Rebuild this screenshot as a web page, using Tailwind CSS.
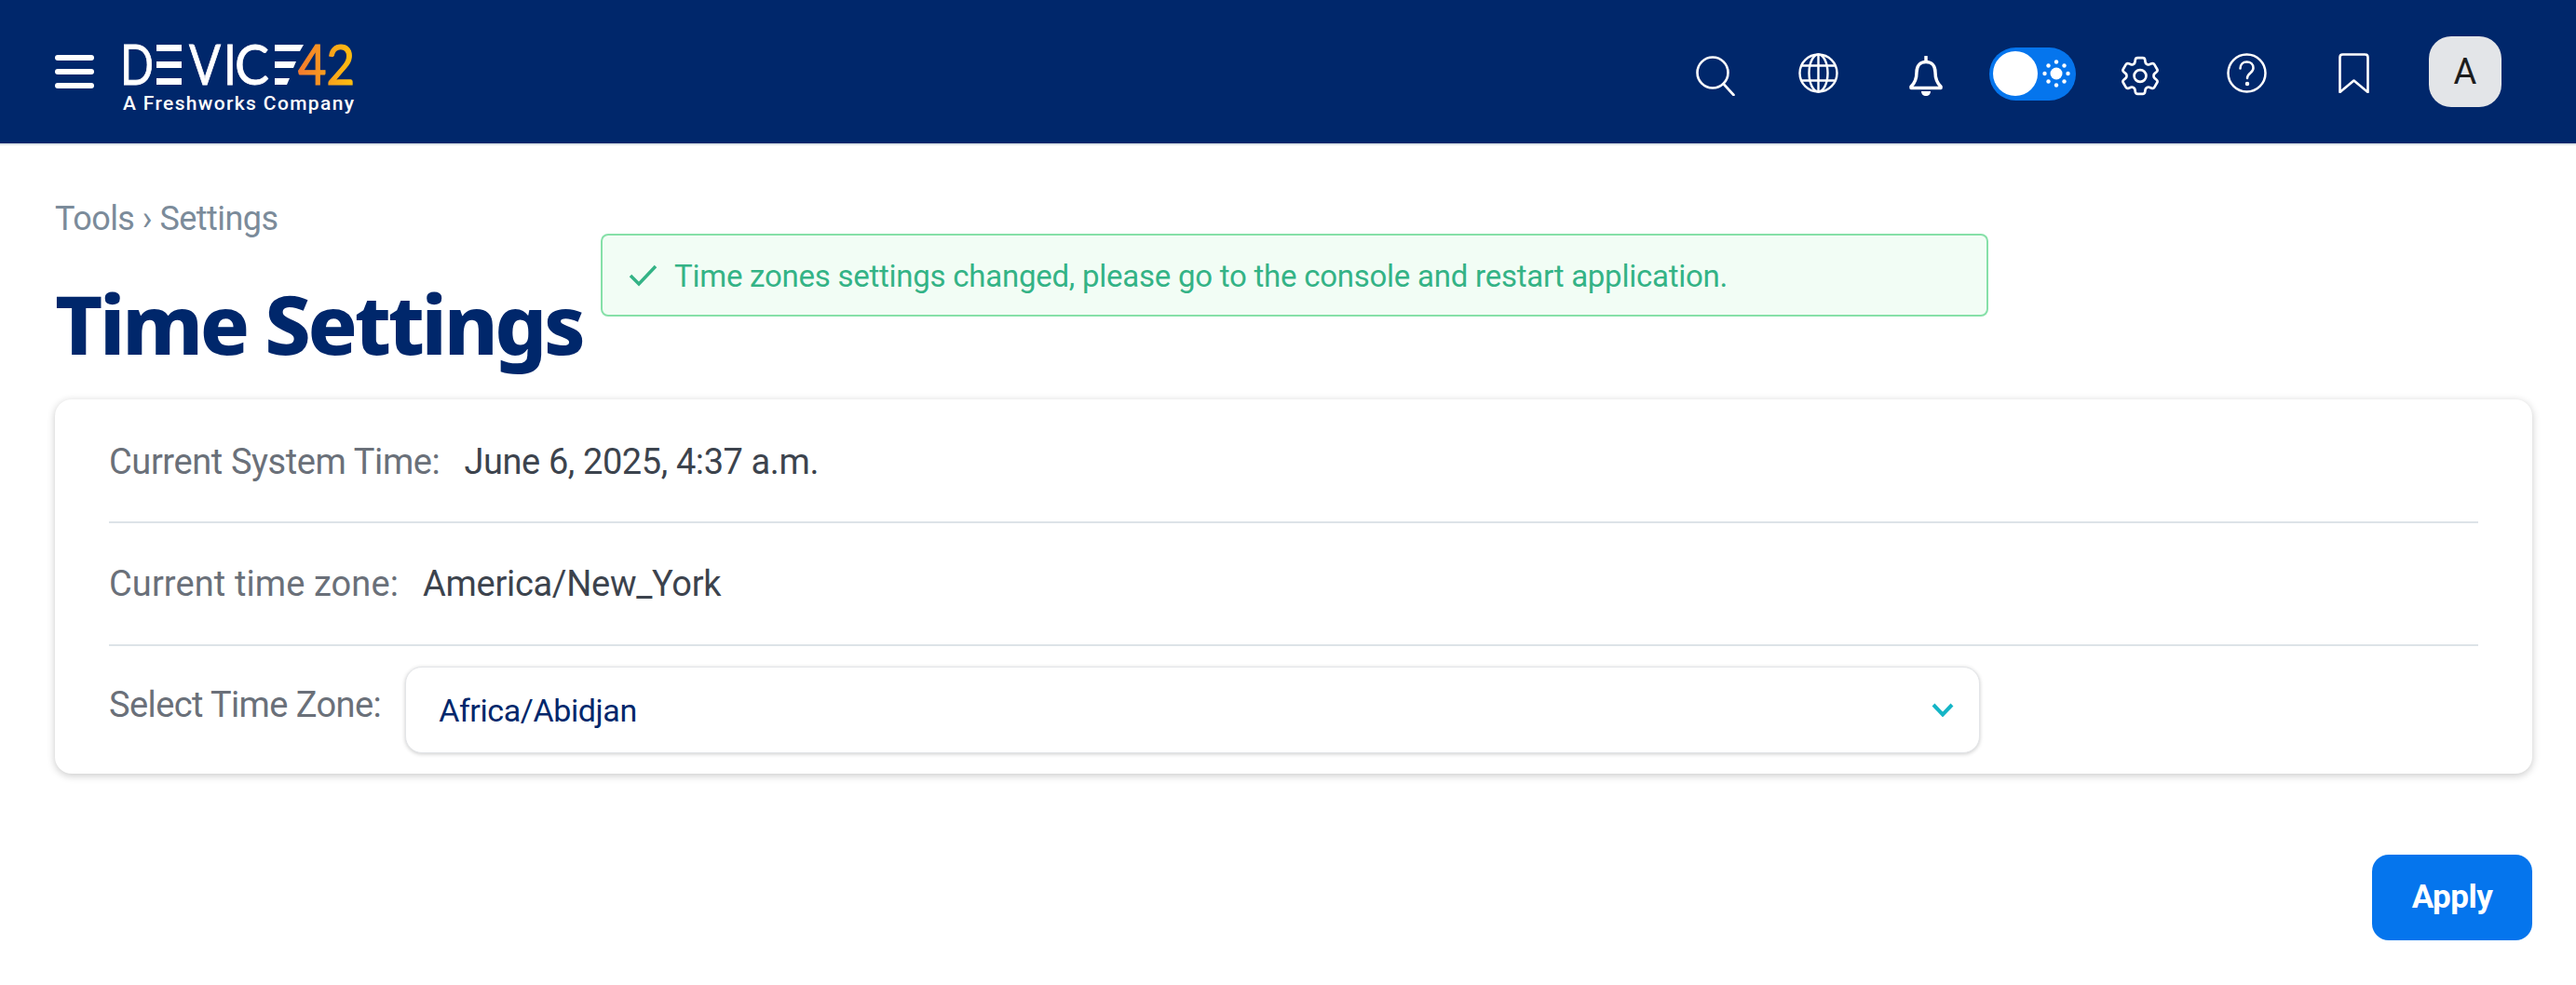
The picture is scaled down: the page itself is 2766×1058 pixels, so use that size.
<!DOCTYPE html>
<html lang="en">
<head>
<meta charset="utf-8">
<title>Time Settings</title>
<script src="https://cdn.jsdelivr.net/npm/@tailwindcss/browser@4"></script>
</head>
<body class="bg-white font-['Roboto',sans-serif] overflow-hidden">
<div class="relative h-[1058px] w-[2766px]">
  <header class="flex h-[156px] items-center border-b-2 border-[#dde3e8] bg-[#00276b]">
    <div class="ml-[59px] flex h-[36px] w-[42px] flex-col justify-between">
      <span class="h-[6px] rounded-full bg-white"></span>
      <span class="h-[6px] rounded-full bg-white"></span>
      <span class="h-[6px] rounded-full bg-white"></span>
    </div>
    <div class="mt-[16px] ml-[31px] flex w-[250px] flex-col">
      <svg width="270" height="82" viewBox="-10 -22 270 82" class="-mt-[22px] -mb-[12px] -ml-[10px] block max-w-none overflow-visible">
        <defs><linearGradient id="g42" x1="0" x2="1" y1="0" y2="0"><stop offset="0" stop-color="#f47a2e"/><stop offset="1" stop-color="#fec10d"/></linearGradient></defs>
        <text x="-3" y="44" font-family="Lato" font-size="60" font-weight="400" fill="#fff" stroke="#fff" stroke-width="0.8" textLength="36" lengthAdjust="spacingAndGlyphs">D</text>
        <g fill="#fff"><rect x="36" y="1" width="27" height="7"/><rect x="36" y="19" width="27" height="7"/><rect x="36" y="37" width="27" height="7"/></g>
        <text x="71" y="44" font-family="Lato" font-size="60" font-weight="400" fill="#fff" stroke="#fff" stroke-width="0.8" textLength="34" lengthAdjust="spacingAndGlyphs">V</text>
        <text x="108" y="44" font-family="Lato" font-size="60" font-weight="400" fill="#fff" stroke="#fff" stroke-width="0.8" textLength="14" lengthAdjust="spacingAndGlyphs">I</text>
        <text x="120" y="44" font-family="Lato" font-size="60" font-weight="400" fill="#fff" stroke="#fff" stroke-width="0.8" textLength="37" lengthAdjust="spacingAndGlyphs">C</text>
        <g fill="#fff"><polygon points="163,1 194,1 190,8 163,8"/><polygon points="163,19 186,19 183,26 163,26"/><polygon points="163,37 179,37 176,44 163,44"/></g>
        <text x="188" y="44" font-family="Lato" font-size="60" font-weight="400" fill="url(#g42)" stroke="url(#g42)" stroke-width="1.2" textLength="61" lengthAdjust="spacingAndGlyphs">42</text>
      </svg>
      <span class="mt-[3px] block w-[250px] text-[21px] leading-[26px] font-medium tracking-[1.35px] whitespace-nowrap text-white">A Freshworks Company</span>
    </div>
    <div class="ml-auto flex items-center pr-[80px]">
      <svg class="translate-y-[4px]" width="42" height="43" viewBox="0 0 42 43" fill="none" stroke="#fff" stroke-width="2.6" stroke-linecap="round"><circle cx="18" cy="18" r="16.5"/><path d="M29.5 30 40.5 42"/></svg>
      <svg class="ml-[68px] translate-y-[1px]" width="43" height="43" viewBox="0 0 43 43" fill="none" stroke="#fff" stroke-width="2.4"><circle cx="21.5" cy="21.5" r="20"/><ellipse cx="21.5" cy="21.5" rx="10" ry="20"/><path d="M21.5 1.5v40M3.5 13.5h36M3.5 29.5h36"/></svg>
      <svg class="ml-[75px] translate-y-[4px]" width="38" height="43" viewBox="0 0 38 43" fill="none" stroke="#fff" stroke-width="3.5"><path d="M19 6.500c-6.500 0-10 4.500-10 11 0 7-1.200 11-6 15.500v1.500h32V33c-4.800-4.500-6-8.500-6-15.500 0-6.500-3.500-11-10-11Z" stroke-linejoin="round"/><path d="M19 1v5" stroke-linecap="round"/><path d="M14 38h10c0 3-2 5-5 5s-5-2-5-5Z" fill="#fff" stroke="none"/></svg>
      <div class="ml-[49px] flex h-[57px] w-[93px] translate-y-[2px] items-center rounded-full bg-[#0575ed] pl-[4px]">
        <span class="h-[48px] w-[48px] rounded-full bg-white"></span>
        <svg class="ml-[2px]" width="36" height="36" viewBox="0 0 36 36" fill="#fff"><circle cx="18" cy="18" r="6.500"/><circle cx="18" cy="5.500" r="2.200"/><circle cx="18" cy="30.500" r="2.200"/><circle cx="5.500" cy="18" r="2.200"/><circle cx="30.500" cy="18" r="2.200"/><circle cx="9.500" cy="9.500" r="2.200"/><circle cx="26.500" cy="9.500" r="2.200"/><circle cx="9.500" cy="26.500" r="2.200"/><circle cx="26.500" cy="26.500" r="2.200"/></svg>
      </div>
      <svg class="ml-[49px] translate-y-[4px]" width="40" height="43" viewBox="2.700 2.300 18.600 19.400" fill="none" stroke="#fff" stroke-width="1.250" stroke-linejoin="round"><path d="M9.594 3.94c.09-.542.56-.94 1.11-.94h2.593c.55 0 1.02.398 1.11.94l.213 1.281c.063.374.313.686.645.87.074.04.147.083.22.127.325.196.72.257 1.075.124l1.217-.456a1.125 1.125 0 0 1 1.37.49l1.296 2.247a1.125 1.125 0 0 1-.26 1.431l-1.003.827c-.293.241-.438.613-.43.992a7.723 7.723 0 0 1 0 .255c-.008.378.137.75.43.991l1.004.827c.424.35.534.955.26 1.43l-1.298 2.247a1.125 1.125 0 0 1-1.369.491l-1.217-.456c-.355-.133-.75-.072-1.076.124a6.47 6.47 0 0 1-.22.128c-.331.183-.581.495-.644.869l-.213 1.281c-.09.543-.56.94-1.11.94h-2.594c-.55 0-1.019-.398-1.11-.94l-.213-1.281c-.062-.374-.312-.686-.644-.87a6.52 6.52 0 0 1-.22-.127c-.325-.196-.72-.257-1.076-.124l-1.217.456a1.125 1.125 0 0 1-1.369-.49l-1.297-2.247a1.125 1.125 0 0 1 .26-1.431l1.004-.827c.292-.24.437-.613.43-.991a6.932 6.932 0 0 1 0-.255c.007-.38-.138-.751-.43-.992l-1.004-.827a1.125 1.125 0 0 1-.26-1.43l1.297-2.247a1.125 1.125 0 0 1 1.37-.491l1.216.456c.356.133.751.072 1.076-.124.072-.044.146-.086.22-.128.332-.183.582-.495.644-.869l.214-1.28Z"/><path d="M15 12a3 3 0 1 1-6 0 3 3 0 0 1 6 0Z"/></svg>
      <svg class="ml-[73px] translate-y-[1px]" width="43" height="43" viewBox="0 0 43 43" fill="none" stroke="#fff" stroke-width="2.500" stroke-linecap="round"><circle cx="21.500" cy="21.500" r="20"/><path d="M14.500 16.500c0-4.500 3-7 7-7s7 2.500 7 6.500c0 5.500-6.500 5.500-6.500 11"/><circle cx="22" cy="33" r="1" fill="#fff"/></svg>
      <svg class="ml-[77px] translate-y-[1px]" width="33" height="43" viewBox="0 0 33 43" fill="none" stroke="#fff" stroke-width="2.600" stroke-linejoin="round"><path d="M1.500 42V4.500c0-1.700 1.300-3 3-3h24c1.700 0 3 1.300 3 3V42L16.500 29.500Z"/></svg>
      <div class="ml-[64px] flex h-[76px] w-[78px] items-center justify-center rounded-[24px] bg-[#e3e5e8] text-[38px] font-normal text-[#1c1c1c]">A</div>
    </div>
  </header>

  <main class="pr-[47px] pl-[59px]">
    <nav class="pt-[58px] text-[36px] leading-[42px] tracking-[-0.55px] text-[#7b8b9a]">Tools › Settings</nav>
    <h1 class="mt-[36px] text-[88px] leading-[110px] font-extrabold tracking-[-3.300px] whitespace-nowrap text-[#00276b] font-['Noto_Sans',sans-serif]">Time Settings</h1>

    <section class="mt-[27px] h-[402px] rounded-[18px] bg-white px-[58px] shadow-[0_2px_9px_rgba(0,0,0,0.22)]">
      <div class="flex h-[133px] items-center border-b-2 border-[#dde3e8] pt-[3px] text-[38px] tracking-[-0.4px]">
        <span class="text-[#6a7079]">Current System Time:</span>
        <span class="ml-[26px] text-[#3c434d]">June 6, 2025, 4:37 a.m.</span>
      </div>
      <div class="flex h-[132px] items-center border-b-2 border-[#dde3e8] pt-[1px] text-[38px] tracking-[-0.3px]">
        <span class="tracking-[0.1px] text-[#6a7079]">Current time zone:</span>
        <span class="ml-[26px] text-[#3c434d]">America/New_York</span>
      </div>
      <div class="flex items-start pt-[22px]">
        <span class="pt-[17px] text-[38px] leading-[48px] tracking-[-0.6px] text-[#6a7079]">Select Time Zone:</span>
        <div class="ml-[26px] flex h-[93px] flex-1 items-center justify-between rounded-[18px] border border-[#e3e5e8] bg-white pr-[27px] pl-[35px] shadow-[0_1px_4px_rgba(0,0,0,0.2)]">
          <span class="pt-[2px] text-[34px] tracking-[-0.4px] text-[#00276b]">Africa/Abidjan</span>
          <svg width="24" height="15" viewBox="0 0 24 15" fill="none" stroke="#14b5c6" stroke-width="4"><path d="M2 2 12 12.500 22 2"/></svg>
        </div>
        <div class="w-[535px] shrink-0"></div>
      </div>
    </section>

    <div class="mt-[87px] flex justify-end">
      <button class="h-[92px] w-[172px] rounded-[18px] bg-[#0575ed] text-[35px] font-bold tracking-[-0.5px] text-white">Apply</button>
    </div>
  </main>

  <div class="absolute top-[251px] left-[645px] flex h-[89px] w-[1490px] items-center rounded-[8px] border-2 border-[#86e0a8] bg-[#f2fdf5] pl-[28px] text-[#34b386]">
    <svg width="31" height="24" viewBox="0 0 31 24" fill="none" stroke="#34b386" stroke-width="3.500"><path d="M2 12l9 9L29 2"/></svg>
    <span class="ml-[18px] pt-[2px] text-[33px] tracking-[-0.25px] whitespace-nowrap">Time zones settings changed, please go to the console and restart application.</span>
  </div>
</div>
</body>
</html>
